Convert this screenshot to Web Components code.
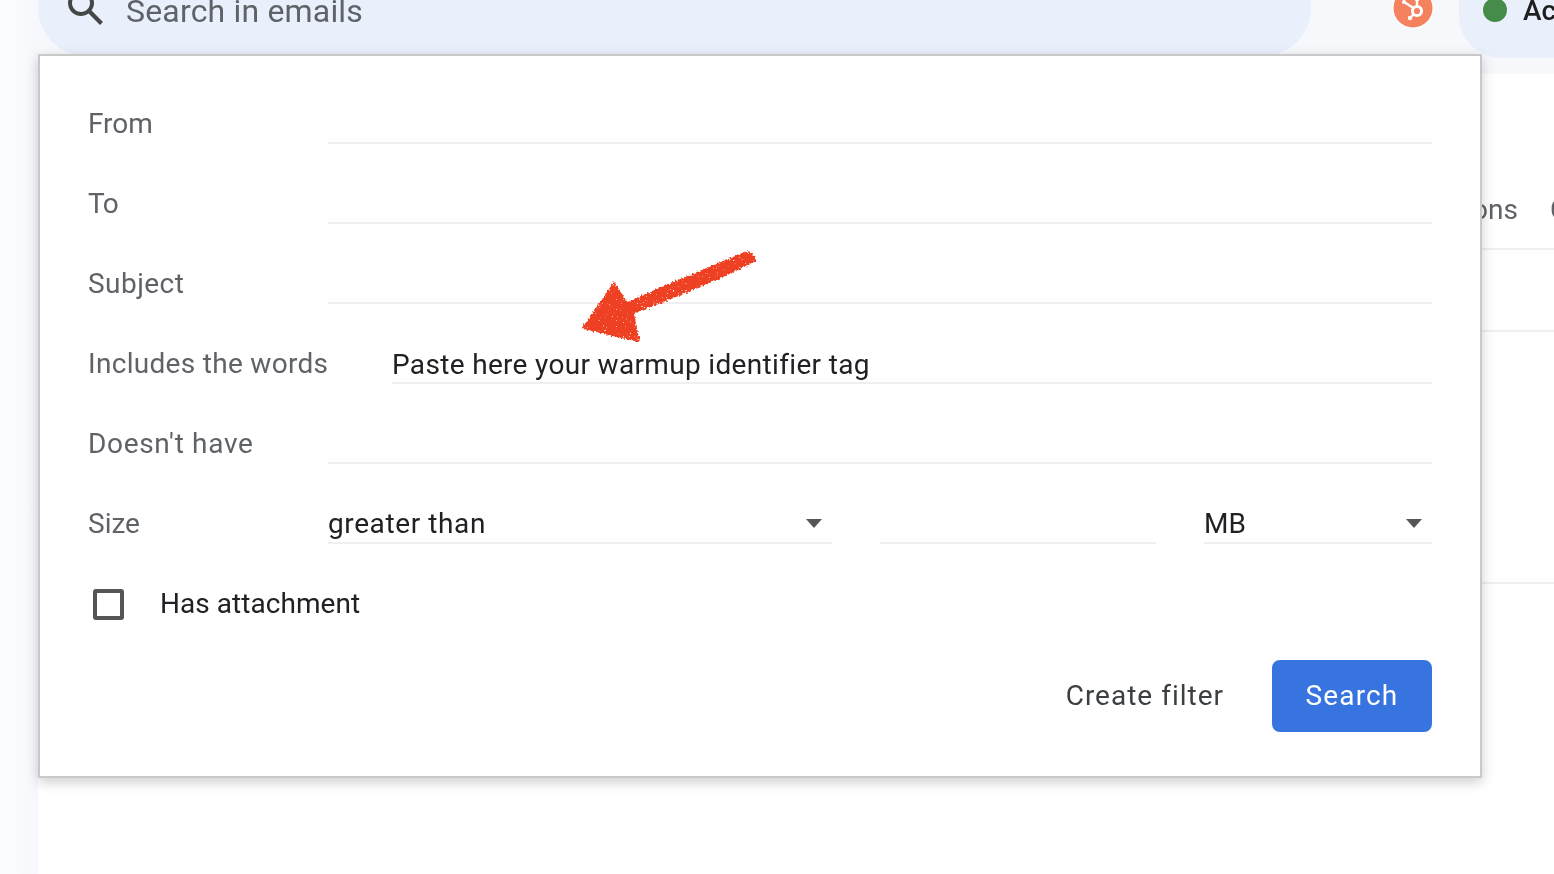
<!DOCTYPE html>
<html>
<head>
<meta charset="utf-8">
<title>Search in emails</title>
<style>
  html, body { margin: 0; height: 100%; overflow: hidden; background: #f6f8fc; }
  body { font-family: Roboto, "Liberation Sans", sans-serif; }
</style>
</head>
<body>
<mail-app>
  <mail-topbar slot="top" placeholder="Search in emails" status="Active"></mail-topbar>
  <mail-list slot="main"></mail-list>
  <search-dialog slot="over">
    <filter-row label="From"></filter-row>
    <filter-row label="To" tracking="-.5"></filter-row>
    <filter-row label="Subject" tracking=".45"></filter-row>
    <filter-row label="Includes the words" tracking=".3" inset><span style="letter-spacing:.33px">Paste here your warmup identifier tag</span></filter-row>
    <filter-row label="Doesn't have" tracking=".68"></filter-row>
    <filter-row label="Size" mode="size">
      <filter-select style="width:504px;letter-spacing:.6px">greater than</filter-select>
      <filter-field style="width:276px"></filter-field>
      <filter-select style="width:228px">MB</filter-select>
    </filter-row>
  </search-dialog>
</mail-app>

<script>
class MailApp extends HTMLElement {
  connectedCallback() {
    this.attachShadow({ mode: "open" }).innerHTML = `
      <style>
        :host { display: block; position: relative; height: 874px; overflow: hidden; filter: blur(.35px);
          background: linear-gradient(90deg, #fcfdfe, #f6f8fc 34px); }
        .body { padding-left: 38px; }
      </style>
      <slot name="top"></slot>
      <div class="body"><slot name="main"></slot></div>
      <slot name="over"></slot>`;
  }
}

class MailTopbar extends HTMLElement {
  connectedCallback() {
    this.attachShadow({ mode: "open" }).innerHTML = `
      <style>
        :host { display: flex; align-items: flex-start; height: 74px; overflow: hidden; padding-left: 38px; background: #f6f8fc content-box; color: #202124; }
        .search, .status { height: 96px; margin-top: -40px; background: #e9f0fb; display: flex; align-items: center; box-sizing: border-box; }
        .search { width: 1273px; flex: none; border-radius: 48px; padding-left: 24px; gap: 16px; color: #5f6368; font-size: 32px; letter-spacing: .18px; }
        .search svg { width: 48px; height: 48px; fill: #444746; flex: none; }
        .search span { position: relative; top: 3px; }
        .hub { width: 42px; height: 42px; margin: -13px 0 0 81px; flex: none; }
        .status { flex: none; width: 200px; margin-left: 25px; border-radius: 42px 0 0 42px; padding-left: 24px; gap: 16px; font-size: 28px; font-weight: 500; color: #1f1f1f; margin-top: -38px; }
        .status i { width: 24px; height: 24px; border-radius: 50%; background: #458b49; flex: none; }
      </style>
      <div class="search">
        <svg viewBox="0 0 24 24"><path d="M20.49 19l-5.73-5.73C15.53 12.2 16 10.91 16 9.5 16 5.91 13.09 3 9.5 3S3 5.91 3 9.5 5.91 16 9.5 16c1.41 0 2.7-.47 3.77-1.23L19 20.49 20.49 19zM5 9.5C5 7.01 7.01 5 9.5 5S14 7.01 14 9.5 11.99 14 9.5 14 5 11.99 5 9.5z"/></svg>
        <span>${this.getAttribute("placeholder")}</span>
      </div>
      <svg class="hub" viewBox="0 0 42 42">
        <circle cx="21" cy="21" r="20.5" fill="#fff"/>
        <circle cx="21" cy="21" r="19.5" fill="#f4825f"/>
        <g fill="none" stroke="#fff" stroke-width="2.4" stroke-linecap="round">
          <circle cx="25" cy="24" r="4.6" stroke-width="3"/>
          <path d="M25 19V12M21.5 21 12 15M21.5 27.5 18 31"/>
        </g>
        <circle cx="18" cy="31" r="2.2" fill="#fff"/>
        <circle cx="12" cy="15" r="2" fill="#fff"/>
        <circle cx="25" cy="12" r="2.4" fill="#fff"/>
      </svg>
      <div class="status"><i></i><span>${this.getAttribute("status")}</span></div>`;
  }
}

class MailList extends HTMLElement {
  connectedCallback() {
    this.attachShadow({ mode: "open" }).innerHTML = `
      <style>
        :host { display: block; height: 800px; background: #fff; overflow: hidden; color: #5f6368; }
        .tabs { height: 176px; box-sizing: border-box; border-bottom: 2px solid #eeeff1; padding: 116px 0 0 1434px; font-size: 28px; line-height: 40px; display: flex; gap: 32px; white-space: nowrap; }
        .row { border-bottom: 2px solid #eeeff1; box-sizing: border-box; }
      </style>
      <div class="tabs"><span>ons</span><span>C</span></div>
      <div class="row" style="height:82px"></div>
      <div class="row" style="height:252px"></div>`;
  }
}

class SearchDialog extends HTMLElement {
  connectedCallback() {
    this.attachShadow({ mode: "open" }).innerHTML = `
      <style>
        :host { display: block; position: absolute; left: 38px; top: 54px; width: 1444px; box-sizing: border-box;
          background: #fff; border: 2px solid #c9c9c9; box-shadow: 0 4px 12px rgba(0,0,0,.2); padding: 8px 48px 44px 48px; }
        .att { display: flex; align-items: flex-end; height: 80px; font-size: 28px; line-height: 40px; color: #202124; letter-spacing: .05px; }
        .att i { width: 31px; height: 31px; box-sizing: border-box; border: 4px solid #555; border-radius: 3px; margin: 0 36.5px 4.5px 4.5px; }
        .actions { display: flex; justify-content: flex-end; align-items: center; margin-top: 36px; gap: 48px; font-size: 28px; }
        .create { color: #3c4043; letter-spacing: 1px; padding-bottom: 2px; }
        .go { width: 160px; height: 72px; display: flex; align-items: center; justify-content: center; background: #3874e0; border-radius: 8px; color: #fff; letter-spacing: 1.15px; padding-bottom: 2px; box-sizing: border-box; }
        .arrow { position: absolute; left: 529px; top: 188px; width: 200px; height: 110px; overflow: visible; }
      </style>
      <slot></slot>
      <div class="att"><i></i><span>Has attachment</span></div>
      <div class="actions"><span class="create">Create filter</span><span class="go">Search</span></div>
      <svg class="arrow" viewBox="570 245 200 110">
        <defs>
          <filter id="rough" x="-10%" y="-10%" width="120%" height="120%" color-interpolation-filters="sRGB">
            <feTurbulence type="fractalNoise" baseFrequency="0.5" numOctaves="3" seed="7" result="warp"/>
            <feDisplacementMap in="SourceGraphic" in2="warp" scale="6" xChannelSelector="R" yChannelSelector="G" result="shape"/>
            <feTurbulence type="fractalNoise" baseFrequency="0.7" numOctaves="1" seed="12"/>
            <feColorMatrix values="0 0 0 0 0  0 0 0 0 0  0 0 0 0 0  9 0 0 0 -1.9"/>
            <feComposite in="shape" operator="in"/>
          </filter>
        </defs>
        <g filter="url(#rough)" fill="#ee4023" stroke="#ee4023" stroke-width="1.5" stroke-linejoin="round">
          <path d="M615 284 628 304 662 289 700 273 748 253 756 258 756 262 720 279 680 296 634 314 640 342 612 336 584 329 600 306Z"/>
        </g>
      </svg>`;
  }
}

class FilterRow extends HTMLElement {
  connectedCallback() {
    const size = this.getAttribute("mode") === "size";
    const inset = this.hasAttribute("inset");
    const tracking = this.getAttribute("tracking") || "0";
    this.attachShadow({ mode: "open" }).innerHTML = `
      <style>
        :host { display: flex; align-items: flex-end; height: 80px; font-size: 28px; line-height: 40px; }
        .label { width: 240px; flex: none; color: #5f6368; white-space: nowrap; letter-spacing: ${tracking}px; }
        .value { flex: 1; color: #202124; height: 40px; box-sizing: border-box; }
        .line { border-bottom: 2px solid #eeeff1; padding-top: 1px; line-height: 39px; }
        .inset { margin-left: 64px; }
        .size { display: flex; gap: 48px; }
      </style>
      <div class="label">${this.getAttribute("label")}</div>
      <div class="value ${size ? "size" : "line"} ${inset ? "inset" : ""}"><slot></slot></div>`;
  }
}

class FilterSelect extends HTMLElement {
  connectedCallback() {
    this.attachShadow({ mode: "open" }).innerHTML = `
      <style>
        :host { display: flex; align-items: center; justify-content: space-between; box-sizing: border-box; height: 40px; padding-top: 2px; border-bottom: 2px solid #eeeff1; color: #202124; padding-right: 10px; }
        i { width: 0; height: 0; border: 8.5px solid transparent; border-top: 9px solid #555; border-bottom: 0; margin-top: -1px; filter: blur(.4px); }
      </style>
      <span><slot></slot></span><i></i>`;
  }
}

class FilterField extends HTMLElement {
  connectedCallback() {
    this.attachShadow({ mode: "open" }).innerHTML = `
      <style>:host { display: block; box-sizing: border-box; height: 40px; border-bottom: 2px solid #eeeff1; }</style>`;
  }
}

customElements.define("mail-app", MailApp);
customElements.define("mail-topbar", MailTopbar);
customElements.define("mail-list", MailList);
customElements.define("search-dialog", SearchDialog);
customElements.define("filter-row", FilterRow);
customElements.define("filter-select", FilterSelect);
customElements.define("filter-field", FilterField);
</script>
</body>
</html>
